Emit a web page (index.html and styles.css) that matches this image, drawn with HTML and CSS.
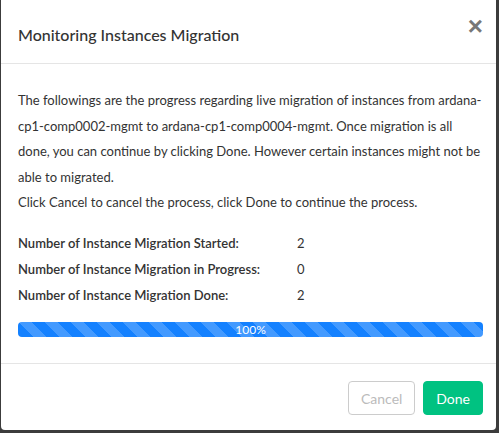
FILE: index.html
```html
<!DOCTYPE html>
<html>
<head>
<meta charset="utf-8">
<link rel="stylesheet" href="styles.css">
</head>
<body>
<div class="modal">
  <div class="modal-header">
    <h4 class="modal-title">Monitoring Instances Migration</h4>
    <button class="close" type="button">&times;</button>
  </div>
  <div class="modal-body">
    <p class="desc">The followings are the progress regarding live migration of instances from ardana-cp1-comp0002-mgmt to ardana-cp1-comp0004-mgmt. Once migration is all done, you can continue by clicking Done. However certain instances might not be able to migrated.<br>Click Cancel to cancel the process, click Done to continue the process.</p>
    <div class="stats">
      <div class="label">Number of Instance Migration Started:</div><div class="value">2</div>
      <div class="label">Number of Instance Migration in Progress:</div><div class="value">0</div>
      <div class="label">Number of Instance Migration Done:</div><div class="value">2</div>
    </div>
    <div class="progress"><div class="progress-bar" style="width:100%">100%</div></div>
  </div>
  <div class="modal-footer">
    <button class="btn btn-cancel" type="button" disabled>Cancel</button>
    <button class="btn btn-done" type="button">Done</button>
  </div>
</div>
</body>
</html>
```

FILE: styles.css
```css
html, body {
  margin: 0;
  padding: 0;
  height: 100%;
}
body {
  background: #3c3c3c;
  font-family: Lato, "Liberation Sans", sans-serif;
  color: #333;
  overflow: hidden;
}
.modal {
  margin-left: 1px;
  width: 495px;
  height: 430px;
  background: #fff;
  border-radius: 0 0 4px 4px;
  display: flex;
  flex-direction: column;
}
.modal-header {
  height: 63px;
  border-bottom: 1px solid #e5e5e5;
  display: flex;
  align-items: flex-start;
  justify-content: space-between;
  padding: 0 13px 0 17px;
  box-sizing: content-box;
}
.modal-title {
  margin: 25px 0 0;
  font-size: 16px;
  font-weight: 500;
  line-height: 20px;
  color: #333;
}
.close {
  margin-top: 13px;
  border: 0;
  background: none;
  padding: 0;
  font-family: "Liberation Sans", sans-serif;
  font-size: 26px;
  font-weight: bold;
  line-height: 26px;
  color: #777;
  cursor: pointer;
}
.modal-body {
  flex: 1;
  padding: 24px 13px 0 17px;
  border-bottom: 1px solid #e5e5e5;
}
.desc {
  margin: 0 0 14px;
  font-size: 13px;
  line-height: 25.5px;
}
.stats {
  display: grid;
  grid-template-columns: 279px 1fr;
  row-gap: 0;
  font-size: 13px;
  line-height: 26px;
}
.stats .label {
  font-weight: 600;
  color: #333;
}
.progress {
  margin-top: 14px;
  height: 15px;
  border-radius: 4px;
  background: #f0f0f0;
  overflow: hidden;
}
.progress-bar {
  height: 100%;
  background-color: #1481ff;
  background-image: linear-gradient(45deg, rgba(255,255,255,.2) 25%, transparent 25%, transparent 50%, rgba(255,255,255,.2) 50%, rgba(255,255,255,.2) 75%, transparent 75%, transparent);
  background-size: 26px 26px;
  color: #fff;
  text-align: center;
  font-size: 12px;
  line-height: 15px;
}
.modal-footer {
  height: 66px;
  display: flex;
  justify-content: flex-end;
  align-items: flex-start;
  gap: 8px;
  padding: 17px 13px 0 0;
  box-sizing: border-box;
}
.btn {
  height: 34px;
  border-radius: 4px;
  font-family: Lato, "Liberation Sans", sans-serif;
  font-size: 14px;
  padding: 0 12px;
  cursor: pointer;
}
.btn-cancel {
  width: 67px;
  background: #fff;
  border: 1px solid #ccc;
  color: #bbb;
}
.btn-done {
  width: 60px;
  background: #00c281;
  border: 1px solid #00c281;
  color: #fff;
}
```
